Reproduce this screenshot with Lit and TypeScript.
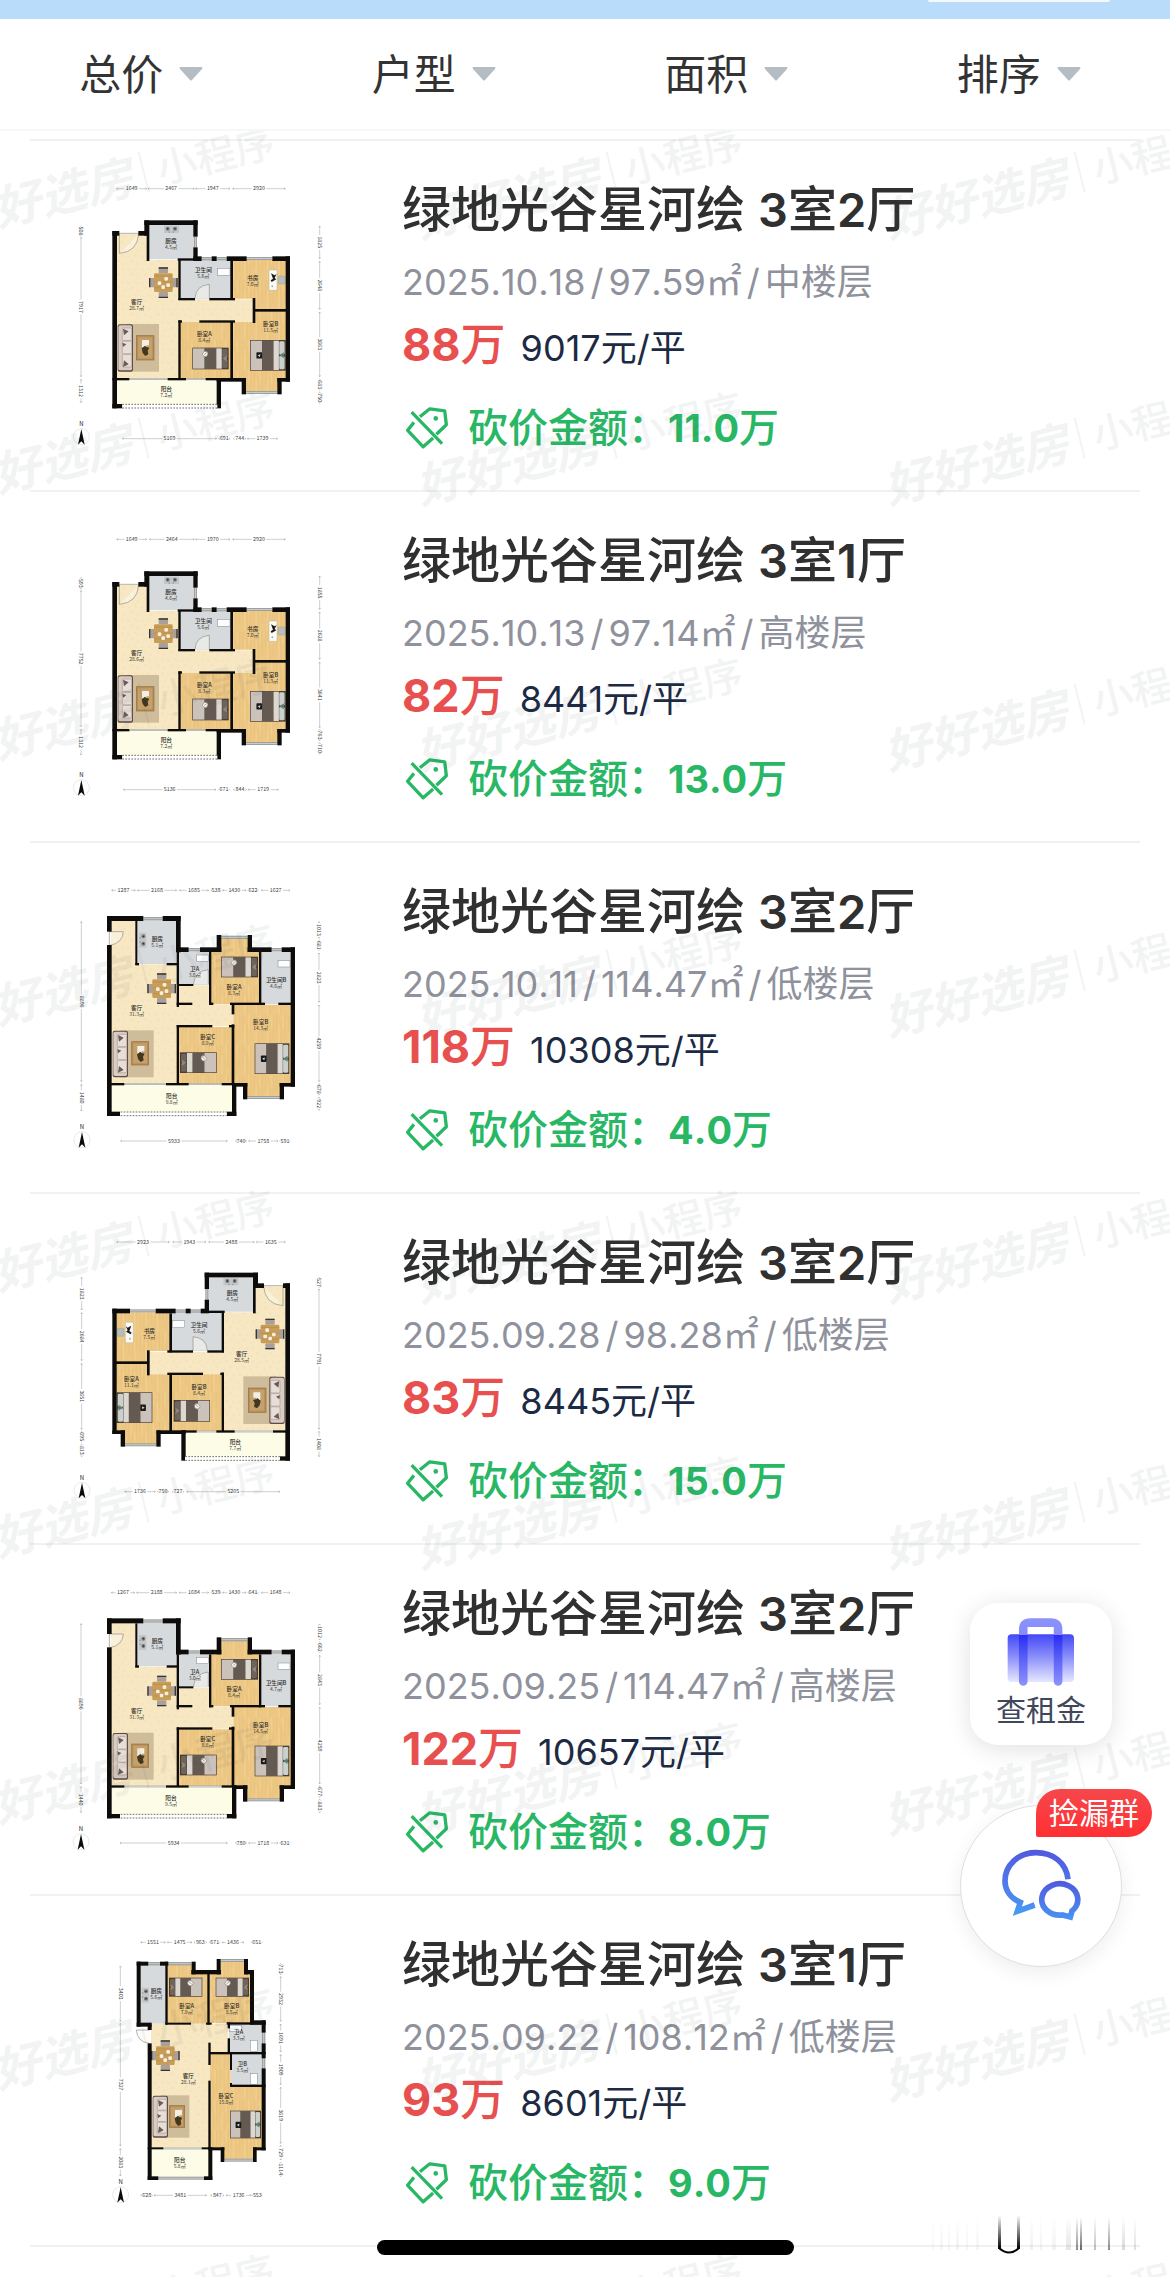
import { LitElement, html, svg, css } from "lit";
import { customElement, property } from "lit/decorators.js";

type Box = [number, number, number, number];
type Label = [number, number, string, string];
type Dim = [number, number, string];
type Bed = [number, number, number, number, "l" | "r"];

interface Shape {
  rooms: [string, string][];
  walls: Box[];
  windows: Box[];
  dashes: Box | null;
  doors: string[];
  stove: [number, number, boolean];
  dining: [number, number];
  lounge: Box;
  table: Box;
  beds: Bed[];
  basins: Box[];
  desk: boolean;
}

interface Plan {
  shape: Shape;
  mirror?: boolean;
  shift: number;
  top: number;
  labels: Label[];
  dimTop: [number, Dim[]];
  dimBottom: [number, Dim[]];
  dimLeft: [number, Dim[]];
  dimRight: [number, Dim[]];
  compass: [number, number];
}

interface Listing {
  rooms: string;
  date: string;
  area: string;
  floor: string;
  price: string;
  unit: string;
  cut: string;
  plan: Plan;
}

const CREAM = "#f7e8c3";
const TILE = "#d7dadd";
const WOOD = "#edc885";
const BALCONY = "#fdfce6";

const shapeA: Shape = {
  rooms: [
    [CREAM, "170,222 262,222 262,300 357,300 357,418 582,418 582,486 357,486 357,657 170,657"],
    [TILE, "265,192 403,192 403,298 265,298"],
    [TILE, "360,300 513,300 513,416 360,416"],
    [WOOD, "518,300 679,300 679,450 583,450 583,416 518,416"],
    [WOOD, "360,486 513,486 513,657 360,657"],
    [WOOD, "518,486 583,486 583,452 679,452 679,657 654,657 654,697 556,697 556,657 518,657"],
    [BALCONY, "170,660 471,660 471,734 170,734"],
  ],
  walls: [
    [157, 213, 171, 745], [157, 213, 178, 227], [235, 213, 267, 227], [253, 181, 413, 195],
    [253, 181, 267, 227], [260, 195, 268, 303], [400, 181, 413, 230], [400, 262, 413, 302],
    [353, 295, 413, 302], [355, 297, 362, 420], [400, 289, 425, 303], [455, 289, 470, 303],
    [500, 289, 560, 303], [637, 289, 690, 303], [677, 289, 690, 665], [511, 303, 519, 420],
    [355, 414, 405, 421], [448, 414, 525, 421], [578, 414, 586, 489], [583, 447, 680, 455],
    [355, 481, 366, 488], [418, 481, 525, 488], [511, 486, 519, 657], [355, 481, 362, 657],
    [157, 654, 208, 661], [323, 654, 378, 661], [437, 654, 483, 661], [470, 654, 483, 745],
    [470, 654, 557, 665], [545, 654, 558, 703], [652, 654, 665, 703], [652, 654, 690, 665],
    [157, 732, 187, 745],
  ],
  windows: [
    [402, 230, 411, 262], [425, 291, 455, 301], [470, 291, 500, 301], [560, 291, 637, 300],
    [558, 693, 652, 702], [208, 655, 323, 660], [378, 655, 437, 660],
  ],
  dashes: [187, 733, 472, 744],
  doors: ["M178 220V280M178 280Q232 276 236 222M178 220H236", "M448 414V373Q408 376 405 414"],
  stove: [312, 197, false],
  dining: [310, 368],
  lounge: [173, 492, 297, 635],
  table: [229, 527, 282, 600],
  beds: [[397, 563, 109, 65, "r"], [570, 540, 107, 92, "r"]],
  basins: [[473, 325, 510, 346]],
  desk: true,
};

const shapeB: Shape = {
  rooms: [
    [CREAM, "153,166 229,166 229,298 352,298 352,361 450,361 450,418 522,418 522,484 352,484 352,657 153,657"],
    [TILE, "230,166 350,166 350,297 230,297"],
    [TILE, "355,259 449,259 449,360 355,360"],
    [WOOD, "453,259 482,259 482,220 565,220 565,259 599,259 599,417 453,417"],
    [TILE, "602,259 694,259 694,417 602,417"],
    [WOOD, "521,419 694,419 694,657 661,657 661,697 560,697 560,657 521,657"],
    [WOOD, "355,486 518,486 518,657 355,657"],
    [BALCONY, "153,660 518,660 518,742 153,742"],
  ],
  walls: [
    [141, 153, 250, 168], [308, 153, 362, 168], [141, 153, 155, 200], [141, 240, 155, 753],
    [348, 153, 362, 262], [226, 168, 232, 300], [226, 294, 237, 301], [320, 294, 352, 301],
    [350, 247, 386, 261], [420, 247, 484, 261], [470, 210, 484, 261], [563, 210, 576, 261],
    [563, 247, 635, 261], [665, 247, 705, 261], [692, 247, 705, 665], [350, 261, 357, 426],
    [350, 413, 397, 420], [447, 261, 454, 420], [357, 357, 400, 363], [597, 261, 604, 420],
    [447, 413, 460, 420], [510, 413, 615, 420], [655, 413, 694, 420], [515, 418, 523, 448],
    [515, 478, 523, 657], [350, 480, 457, 487], [507, 480, 523, 487], [350, 480, 357, 657],
    [141, 654, 193, 661], [318, 654, 386, 661], [485, 654, 530, 661], [516, 654, 529, 753],
    [500, 740, 529, 753], [141, 740, 180, 753], [516, 654, 562, 665], [549, 654, 562, 703],
    [659, 654, 672, 703], [659, 654, 705, 665],
  ],
  windows: [
    [250, 156, 308, 166], [386, 249, 420, 259], [484, 212, 563, 222], [635, 249, 665, 259],
    [562, 693, 659, 702], [193, 655, 318, 660], [386, 655, 485, 660],
  ],
  dashes: [182, 741, 500, 752],
  doors: ["M148 240V200H190Q188 234 150 241", "M445 358V314Q404 318 400 358"],
  stove: [235, 203, true],
  dining: [305, 371],
  lounge: [158, 496, 281, 637],
  table: [215, 530, 266, 600],
  beds: [[483, 275, 111, 62, "r"], [360, 562, 110, 62, "l"], [584, 535, 104, 92, "r"]],
  basins: [[410, 270, 446, 289], [654, 287, 690, 306]],
  desk: false,
};

const shapeC: Shape = {
  rooms: [
    [TILE, "240,135 318,135 318,311 240,311"],
    [WOOD, "320,135 396,135 396,161 445,161 445,311 320,311"],
    [WOOD, "447,161 481,161 481,126 554,126 554,161 572,161 572,309 447,309"],
    [CREAM, "273,311 505,311 505,400 448,400 448,686 273,686"],
    [TILE, "507,311 607,311 607,399 507,399"],
    [TILE, "513,401 607,401 607,497 513,497"],
    [WOOD, "449,401 512,401 512,497 607,497 607,686 582,686 582,720 491,720 491,686 449,686"],
    [BALCONY, "273,687 447,687 447,773 273,773"],
  ],
  walls: [
    [230, 125, 265, 137], [300, 125, 325, 137], [395, 125, 407, 163], [230, 125, 242, 320],
    [230, 308, 275, 320], [316, 125, 323, 314], [316, 308, 393, 314], [394, 150, 483, 163],
    [470, 117, 482, 163], [552, 117, 564, 163], [552, 150, 582, 163], [570, 150, 582, 313],
    [442, 160, 449, 314], [438, 308, 455, 314], [500, 307, 617, 314], [570, 301, 617, 314],
    [605, 301, 617, 338], [605, 370, 617, 415], [605, 445, 617, 691], [503, 307, 510, 325],
    [503, 355, 510, 400], [447, 396, 617, 403], [510, 400, 516, 450], [510, 489, 516, 500],
    [510, 494, 617, 501], [445, 368, 452, 435], [445, 482, 452, 686], [263, 314, 275, 330],
    [263, 370, 275, 780], [263, 682, 310, 688], [425, 682, 457, 688], [445, 682, 457, 780],
    [263, 769, 295, 780], [432, 769, 457, 780], [445, 682, 493, 691], [482, 682, 493, 726],
    [579, 682, 590, 726], [579, 682, 617, 691],
  ],
  windows: [
    [265, 126, 300, 136], [323, 126, 395, 136], [482, 117, 552, 126], [606, 338, 616, 370],
    [606, 415, 616, 445], [493, 716, 579, 725], [310, 683, 425, 688], [295, 770, 432, 779],
  ],
  dashes: null,
  doors: ["M270 330H229Q232 366 268 370"],
  stove: [243, 203, true],
  dining: [316, 407],
  lounge: [278, 526, 388, 653],
  table: [328, 557, 374, 622],
  beds: [[327, 173, 100, 57, "l"], [467, 173, 100, 57, "r"], [510, 572, 93, 83, "r"]],
  basins: [[571, 361, 592, 394], [571, 461, 592, 494], [508, 316, 545, 334]],
  desk: false,
};

const plans: Plan[] = [
  {
    shape: shapeA, shift: 0, top: 9, compass: [64, 830],
    labels: [
      [333, 250, "厨房", "4.5㎡"], [430, 337, "卫生间", "5.6㎡"], [578, 361, "书房", "7.0㎡"],
      [230, 431, "客厅", "28.7㎡"], [433, 529, "卧室A", "8.4㎡"], [632, 498, "卧室B", "11.5㎡"],
      [319, 694, "阳台", "7.2㎡"],
    ],
    dimTop: [86, [[168, 262, "1649"], [262, 405, "2467"], [405, 512, "1947"], [516, 678, "2920"]]],
    dimBottom: [836, [[185, 472, "5169"], [474, 512, "691"], [518, 560, "744"], [560, 655, "1739"]]],
    dimLeft: [63, [[196, 230, "508"], [230, 652, "7917"], [656, 730, "1312"]]],
    dimRight: [779, [[196, 298, "1825"], [302, 450, "2648"], [454, 652, "3663"], [656, 692, "683"], [694, 732, "750"]]],
  },
  {
    shape: shapeA, shift: 3, top: 12, compass: [64, 833],
    labels: [
      [333, 252, "厨房", "4.6㎡"], [430, 339, "卫生间", "5.6㎡"], [578, 362, "书房", "7.0㎡"],
      [230, 434, "客厅", "28.6㎡"], [433, 531, "卧室A", "8.3㎡"], [632, 500, "卧室B", "11.3㎡"],
      [319, 696, "阳台", "7.2㎡"],
    ],
    dimTop: [88, [[168, 262, "1649"], [266, 405, "2464"], [405, 512, "1970"], [516, 678, "2920"]]],
    dimBottom: [839, [[188, 470, "5136"], [474, 510, "671"], [518, 562, "844"], [562, 657, "1719"]]],
    dimLeft: [63, [[200, 240, "593"], [240, 652, "7752"], [656, 737, "1312"]]],
    dimRight: [779, [[196, 300, "1855"], [304, 450, "2628"], [454, 655, "3641"], [656, 694, "763"], [696, 735, "710"]]],
  },
  {
    shape: shapeB, shift: 0, top: 0, compass: [66, 824],
    labels: [
      [292, 228, "厨房", "5.1㎡"], [404, 319, "卫A", "3.0㎡"], [522, 371, "卧室A", "8.3㎡"],
      [648, 352, "卫生间B", "4.6㎡"], [230, 436, "客厅", "31.3㎡"], [602, 478, "卧室B", "14.3㎡"],
      [443, 521, "卧室C", "8.9㎡"], [335, 698, "阳台", "9.8㎡"],
    ],
    dimTop: [76, [[153, 228, "1287"], [230, 352, "2168"], [356, 448, "1685"], [452, 484, "538"], [486, 560, "1430"], [562, 596, "622"], [602, 692, "1627"]]],
    dimBottom: [828, [[180, 504, "5933"], [524, 562, "740"], [564, 656, "1758"], [658, 692, "591"]]],
    dimLeft: [64, [[168, 652, "8896"], [656, 740, "1480"]]],
    dimRight: [777, [[168, 222, "1013"], [224, 258, "681"], [262, 414, "2823"], [418, 652, "4259"], [654, 692, "678"], [694, 738, "922"]]],
  },
  {
    shape: { ...shapeA, dining: [217, 365] }, mirror: true, shift: -23, top: -12, compass: [66, 811],
    labels: [
      [517, 226, "厨房", "4.5㎡"], [417, 321, "卫生间", "5.6㎡"], [268, 338, "书房", "7.5㎡"],
      [545, 408, "客厅", "28.5㎡"], [417, 507, "卧室B", "8.4㎡"], [214, 482, "卧室A", "11.1㎡"],
      [526, 671, "阳台", "7.7㎡"],
    ],
    dimTop: [66, [[168, 330, "2923"], [336, 440, "1943"], [444, 585, "2488"], [587, 678, "1635"]]],
    dimBottom: [815, [[192, 288, "1736"], [290, 328, "750"], [334, 374, "727"], [378, 662, "5205"]]],
    dimLeft: [65, [[170, 272, "1823"], [276, 424, "2684"], [428, 630, "3651"], [632, 668, "695"], [670, 712, "813"]]],
    dimRight: [777, [[170, 205, "527"], [205, 630, "7791"], [632, 712, "1408"]]],
  },
  {
    shape: shapeB, shift: -2, top: -3, compass: [63, 821],
    labels: [
      [292, 226, "厨房", "5.1㎡"], [404, 317, "卫A", "3.0㎡"], [522, 369, "卧室A", "8.4㎡"],
      [648, 350, "卫生间B", "4.7㎡"], [230, 434, "客厅", "31.3㎡"], [602, 476, "卧室B", "14.5㎡"],
      [443, 519, "卧室C", "8.8㎡"], [333, 695, "阳台", "9.5㎡"],
    ],
    dimTop: [74, [[152, 226, "1267"], [228, 352, "2188"], [356, 448, "1684"], [452, 484, "539"], [486, 560, "1430"], [562, 596, "641"], [602, 692, "1648"]]],
    dimBottom: [825, [[178, 504, "5934"], [524, 562, "780"], [564, 656, "1718"], [658, 692, "631"]]],
    dimLeft: [63, [[165, 650, "8896"], [654, 736, "1440"]]],
    dimRight: [779, [[166, 218, "1012"], [220, 256, "662"], [260, 412, "2843"], [416, 650, "4259"], [652, 690, "677"], [692, 736, "883"]]],
  },
  {
    shape: shapeC, shift: 0, top: -6, compass: [182, 824],
    labels: [
      [289, 218, "厨房", "5.6㎡"], [380, 264, "卧室A", "7.9㎡"], [515, 264, "卧室B", "8.5㎡"],
      [536, 341, "卫A", "3.3㎡"], [547, 439, "卫B", "3.5㎡"], [385, 474, "客厅", "28.1㎡"],
      [498, 535, "卧室C", "15.0㎡"], [359, 726, "阳台", "5.8㎡"],
    ],
    dimTop: [67, [[240, 318, "1551"], [320, 398, "1475"], [400, 442, "963"], [446, 482, "671"], [484, 554, "1436"], [572, 608, "651"]]],
    dimBottom: [826, [[240, 280, "628"], [280, 442, "3481"], [450, 494, "847"], [496, 576, "1736"], [576, 608, "553"]]],
    dimLeft: [181, [[136, 306, "3403"], [308, 680, "7327"], [684, 770, "2083"]]],
    dimRight: [662, [[128, 166, "713"], [168, 306, "2932"], [310, 398, "1691"], [402, 496, "1909"], [500, 672, "3619"], [674, 722, "729"], [724, 772, "1114"]]],
  },
];

const listings: Listing[] = [
  { rooms: "3室2厅", date: "2025.10.18", area: "97.59㎡", floor: "中楼层", price: "88万", unit: "9017元/平", cut: "11.0万", plan: plans[0] },
  { rooms: "3室1厅", date: "2025.10.13", area: "97.14㎡", floor: "高楼层", price: "82万", unit: "8441元/平", cut: "13.0万", plan: plans[1] },
  { rooms: "3室2厅", date: "2025.10.11", area: "114.47㎡", floor: "低楼层", price: "118万", unit: "10308元/平", cut: "4.0万", plan: plans[2] },
  { rooms: "3室2厅", date: "2025.09.28", area: "98.28㎡", floor: "低楼层", price: "83万", unit: "8445元/平", cut: "15.0万", plan: plans[3] },
  { rooms: "3室2厅", date: "2025.09.25", area: "114.47㎡", floor: "高楼层", price: "122万", unit: "10657元/平", cut: "8.0万", plan: plans[4] },
  { rooms: "3室1厅", date: "2025.09.22", area: "108.12㎡", floor: "低楼层", price: "93万", unit: "8601元/平", cut: "9.0万", plan: plans[5] },
];

/** Sets runs of digits in <b>, leaving Chinese characters at the surrounding weight. */
const mixed = (text: string) =>
  text.split(/([\d.]+)/).map((part) => (/^[\d.]+$/.test(part) ? html`<b>${part}</b>` : part));

@customElement("floor-plan")
class FloorPlan extends LitElement {
  @property({ attribute: false }) plan!: Plan;

  static styles = css`
    :host { display: block; }
    svg { display: block; width: 100%; height: 100%; }
    text { font-family: "Noto Sans CJK SC", sans-serif; text-anchor: middle; }
    .name { font-size: 17px; font-weight: 500; fill: #2c2b28; }
    .size { font-size: 15px; fill: #3a3935; }
    .dim { font-size: 16px; fill: #3c3d40; }
    .north { font-size: 18px; fill: #222; }
    .rule { stroke: #8d8f92; stroke-width: 1.3; fill: none; }
    .wall { fill: #0d0c0b; }
    .window { fill: #9ca09f; }
    .pane { stroke: #dfe2e2; stroke-width: 2; }
    .door { fill: #fbf9f2; fill-opacity: 0.5; stroke: #8f8c84; stroke-width: 2; }
  `;

  private bed([x, y, w, h, head]: Bed) {
    const flip = head === "l" ? `translate(${2 * x + w} 0) scale(-1 1)` : "";
    return svg`<g transform=${flip}>
      <rect x=${x} y=${y} width=${w} height=${h} fill="#4a3d35"/>
      <rect x=${x + 2} y=${y + 2} width=${w * 0.32} height=${h - 4} fill="#cbc3bb"/>
      <rect x=${x + w * 0.34} y=${y + 1} width=${w * 0.32} height=${h - 2} fill="#645a52"/>
      <rect x=${x + w * 0.66} y=${y + 2} width=${w * 0.15} height=${h - 4} fill="#ddd7d1"/>
      <rect x=${x + w * 0.82} y=${y + 4} width=${w * 0.15} height=${h / 2 - 6} rx="4" fill=${h > 70 ? "#c9d0cd" : "#6d645c"}/>
      <rect x=${x + w * 0.82} y=${y + h / 2 + 2} width=${w * 0.15} height=${h / 2 - 6} rx="4" fill=${h > 70 ? "#c9d0cd" : "#6d645c"}/>
      <path d=${`M${x + w * 0.82} ${y + h / 2}l${w * 0.13} -9v18z`} fill=${h > 70 ? "#5f8177" : "#8f857b"}/>
      ${h > 70
        ? svg`<rect x=${x + w * 0.18} y=${y + h * 0.4} width="17" height="19" rx="2" fill="#1c1b1b"/><path d=${`M${x + w * 0.18 + 4} ${y + h * 0.4 + 9}l8 -3l-2 8z`} fill="#ddd"/>`
        : svg`<path d=${`M${x + w * 0.27} ${y + h * 0.3}q5 -12 14 -8q7 6 0 14q-9 6 -14 -6zm5 2l9 -7`} fill="#f7f5f2" stroke="#8a8178" stroke-width="2"/>`}
    </g>`;
  }

  private furniture(s: Shape) {
    const [dx, dy] = s.dining;
    const [lx, ly, lr, lb] = s.lounge;
    const [tx, ty, tr, tb] = s.table;
    const [sx, sy, upright] = s.stove;
    const seat = (lb - ly - 24) / 3;
    return svg`
      <rect x=${lx + 24} y=${ly} width=${lr - lx - 24} height=${lb - ly} fill="#cfbc9a"/>
      <rect x=${lx} y=${ly + 1} width="46" height=${lb - ly - 1} rx="6" fill="#5f4a45"/>
      <rect x=${lx + 2} y=${ly + 4} width="41" height=${lb - ly - 8} rx="5" fill="#d8ccc4"/>
      ${[0, 1, 2].map((i) => svg`<rect x=${lx + 14} y=${ly + 12 + i * seat} width="28" height=${seat - 2} rx="3" fill="#e7ded8" stroke="#9b8b83" stroke-width="1.5"/>`)}
      <path d=${`M${lx + 16} ${ly + 14}l17 8l-14 12zM${lx + 16} ${lb - 14}l17 -8l-14 -12zM${lx + 14} ${ly + 56}l12 5l-10 8z`} fill="#6b5a56"/>
      <rect x=${tx} y=${ty} width=${tr - tx} height=${tb - ty} fill="#b58d58" stroke="#94703f" stroke-width="2"/>
      <rect x=${tx + 5} y=${ty + 5} width=${tr - tx - 10} height=${tb - ty - 10} fill="#c6a06b"/>
      <path d=${`M${tx + 17} ${ty + 13}h21v16h-8v7h-13z`} fill="#f3efe4"/>
      <path d=${`M${tx + 16} ${ty + 38}l10 -8l4 4l9 2l-5 9l2 11l-9 5l-8 -9z`} fill="#40381f"/>

      ${[[dx - 14, dy - 46, 28, 18], [dx - 14, dy + 28, 28, 18], [dx - 43, dy - 14, 18, 28], [dx + 25, dy - 14, 18, 28]].map(
        ([x, y, w, h]) => svg`<rect x=${x} y=${y} width=${w} height=${h} rx="3" fill="#a7a09b"/>`
      )}
      <path d=${`M${dx - 14} ${dy - 44}h28M${dx - 14} ${dy + 44}h28M${dx - 41} ${dy - 14}v28M${dx + 41} ${dy - 14}v28`} stroke="#3c3430" stroke-width="4"/>
      <rect x=${dx - 28} y=${dy - 28} width="56" height="56" rx="4" fill="#c89d58"/>
      ${[-20, -2, 15].map((o) => svg`<path d=${`M${dx - 28} ${dy + o}h56`} stroke="#b2853f" stroke-width="1.5"/>`)}
      ${[[-17, -4], [3, -17], [9, 2], [-6, 8]].map(([x, y]) => svg`<rect x=${dx + x} y=${dy + y} width="11" height="11" rx="4" fill="#f5efe4"/>`)}

      <g transform=${upright ? `translate(${sx + 24} ${sy}) rotate(90)` : `translate(${sx} ${sy})`}>
        <rect width="45" height="22" fill="#c3c6c8"/>
        <circle cx="11" cy="9" r="6" fill="#77797b"/><circle cx="33" cy="9" r="6" fill="#77797b"/>
        <circle cx="11" cy="9" r="2" fill="#222"/><circle cx="33" cy="9" r="2" fill="#222"/>
        <path d="M14 19h4M26 19h4" stroke="#666" stroke-width="2"/>
      </g>
      ${s.beds.map((b) => this.bed(b))}
      ${s.basins.map(([x, y, r, b]) => svg`<rect x=${x} y=${y} width=${r - x} height=${b - y} fill="#fdfdfd" stroke="#84888b" stroke-width="1.5"/>`)}
      ${s.desk
        ? svg`<rect x="655" y="348" width="21" height="24" rx="3" fill="#b7beb9" stroke="#8a918c"/>
          <rect x="627" y="330" width="24" height="61" rx="2" fill="#fbfaf7" stroke="#a79c88"/>
          <path d="M633 340l11 6l6 -4l-6 12l5 4l-14 8l-3 -5l7 -5z" fill="#1d1c1c"/><circle cx="637" cy="379" r="3" fill="#8fbf9a"/>`
        : ""}`;
  }

  private shapes(s: Shape) {
    return svg`
      ${s.rooms.map(([fill, points]) => svg`
        <polygon points=${points} fill=${fill}/>
        ${fill === WOOD ? svg`<polygon points=${points} fill="url(#grain)"/>` : ""}
        ${fill === CREAM ? svg`<polygon points=${points} fill="url(#marble)"/>` : ""}`)}
      ${s.doors.map((d) => svg`<path class="door" d=${d}/>`)}
      ${this.furniture(s)}
      ${s.windows.map(([x, y, r, b]) => svg`<rect class="window" x=${x} y=${y} width=${r - x} height=${b - y}/>
        <path class="pane" d=${r - x > b - y ? `M${x} ${(y + b) / 2}H${r}` : `M${(x + r) / 2} ${y}V${b}`}/>`)}
      ${s.walls.map(([x, y, r, b]) => svg`<rect class="wall" x=${x} y=${y} width=${r - x} height=${b - y}/>`)}
      ${s.dashes
        ? svg`<rect x=${s.dashes[0]} y=${s.dashes[1]} width=${s.dashes[2] - s.dashes[0]} height=${s.dashes[3] - s.dashes[1]} fill="#fff"/>
          <path d=${`M${s.dashes[0]} ${s.dashes[1]}H${s.dashes[2]}M${s.dashes[0]} ${s.dashes[3]}H${s.dashes[2]}`} stroke="#4b4a46" stroke-width="2.4" stroke-dasharray="5 4"/>`
        : ""}`;
  }

  private dims([at, list]: [number, Dim[]], vertical: boolean) {
    return list.map(([a, b, label]) => {
      const mid = (a + b) / 2;
      const half = label.length * 4 + 6;
      const lines = b - a > half * 2
        ? `M${a + 2} 0H${mid - half}M${mid + half} 0H${b - 2}M${a + 6} -3l-4 3l4 3M${b - 6} -3l4 3l-4 3`
        : `M${a + 2} -2v4M${b - 2} -2v4`;
      return svg`<g transform=${vertical ? `translate(${at} 0) rotate(90) scale(1 -1) scale(1 -1)` : `translate(0 ${at})`}>
        <path class="rule" d=${lines}/>
        <text class="dim" x=${mid} y="5">${label}</text>
      </g>`;
    });
  }

  render() {
    const p = this.plan;
    const [cx, cy] = p.compass;
    const move = p.mirror ? `translate(847 ${p.shift}) scale(-1 1)` : `translate(0 ${p.shift})`;
    return html`<svg viewBox=${`0 ${p.top} 870 900`} role="img" aria-label="户型图">
      <defs>
        <pattern id="grain" width="34" height="90" patternUnits="userSpaceOnUse">
          <path d="M5 0V50M17 20V90M28 0V70" stroke="#dcae5c" stroke-width="3" opacity=".3"/>
          <path d="M11 30V90M23 0V40" stroke="#f8dda3" stroke-width="4" opacity=".35"/>
        </pattern>
        <pattern id="marble" width="40" height="40" patternUnits="userSpaceOnUse">
          <path d="M2 8l9 3M24 4l7 6M12 25l8 -4M30 30l6 3" stroke="#ecd6a2" stroke-width="4" opacity=".4"/>
        </pattern>
      </defs>
      <g transform=${move}>${this.shapes(p.shape)}</g>
      ${p.labels.map(([x, y, name, size]) => svg`<text class="name" x=${x} y=${y}>${name}</text><text class="size" x=${x} y=${y + 18}>${size}</text>`)}
      ${this.dims(p.dimTop, false)}${this.dims(p.dimBottom, false)}
      ${this.dims(p.dimLeft, true)}${this.dims(p.dimRight, true)}
      <text class="north" x=${cx} y=${cy - 31}>N</text>
      <circle cx=${cx} cy=${cy} r="24" fill="#fff" stroke="#d2d2d2" stroke-width="1.5"/>
      <path d=${`M${cx} ${cy - 23}L${cx + 10} ${cy + 24}L${cx} ${cy + 14}L${cx - 10} ${cy + 24}Z`} fill="#0b0b0b"/>
    </svg>`;
  }
}

@customElement("listing-row")
class ListingRow extends LitElement {
  @property({ attribute: false }) item!: Listing;

  static styles = css`
    :host { display: block; }
    .row {
      display: grid;
      grid-template-columns: 290px 1fr;
      column-gap: 52px;
      padding: 22px 0 27px 30px;
      color: inherit;
      text-decoration: none;
    }
    .plan { height: 300px; }
    .info {
      display: flex;
      flex-direction: column;
      align-items: flex-start;
      padding-top: 15px;
      min-width: 0;
      font-kerning: none;
      font-feature-settings: "calt" 0;
    }
    .title {
      margin: 0;
      font-size: 49px;
      line-height: 64px;
      font-weight: 500;
      color: #303030;
      white-space: nowrap;
    }
    .title b { font-size: 47px; font-weight: 600; }
    .meta { display: flex; gap: 5px; margin-top: 16px; font-size: 36px; line-height: 48px; color: #8f929c; }
    .cost { display: flex; align-items: baseline; gap: 15px; margin-top: 11px; line-height: 56px; }
    .price { font-size: 45px; font-weight: 500; color: #e8504f; }
    .price b, .cut b { font-weight: 700; }
    .unit { font-size: 36px; color: #1c2a44; }
    .cut {
      display: flex;
      align-items: center;
      gap: 20px;
      margin-top: 28px;
      font-size: 40px;
      line-height: 48px;
      font-weight: 500;
      color: #28b765;
    }
    .cut b { font-size: 38px; }
    .tag { width: 42px; height: 42px; margin-left: 4px; }
  `;

  render() {
    const i = this.item;
    return html`<a class="row" href="#listing">
      <floor-plan class="plan" .plan=${i.plan}></floor-plan>
      <div class="info">
        <h2 class="title">绿地光谷星河绘 ${mixed(i.rooms)}</h2>
        <div class="meta"><span>${i.date}</span><span>/</span><span>${i.area}</span><span>/</span><span>${i.floor}</span></div>
        <div class="cost"><span class="price">${mixed(i.price)}</span><span class="unit">${i.unit}</span></div>
        <div class="cut">
          <svg class="tag" viewBox="0 0 127 126" fill="none" stroke="currentColor" stroke-width="10" stroke-linejoin="round" aria-hidden="true">
            <path d="M17 15L109 110M42 29L72 5L117 11L122 53L92 82M24 46L5 70L52 120L82 93"/>
            <circle cx="90" cy="34" r="7" fill="currentColor" stroke="none"/>
          </svg>
          <span>砍价金额：${mixed(i.cut)}</span>
        </div>
      </div>
    </a>`;
  }
}

@customElement("app-root")
class AppRoot extends LitElement {
  static styles = css`
    :host {
      display: block;
      position: relative;
      min-height: 100vh;
      overflow: hidden;
      background: #fff;
      font-family: Inter, "Noto Sans CJK SC", sans-serif;
    }
    .strip { display: flex; justify-content: flex-end; height: 19px; padding-right: 60px; background: #b9dcfb; }
    .pill { width: 182px; height: 2px; border-radius: 0 0 8px 8px; background: #f3f9ff; }
    .filters { display: grid; grid-template-columns: repeat(4, 1fr); border-bottom: 2px solid #f7f7f8; }
    .filter {
      display: flex;
      align-items: center;
      justify-content: center;
      gap: 16px;
      height: 110px;
      padding: 0 10px 6px 0;
      border: 0;
      background: none;
      font: inherit;
      font-size: 42px;
      color: #333;
    }
    .caret { width: 24px; height: 14px; margin-top: 6px; fill: #b5bdc4; }
    .body { position: relative; padding: 8px 30px 30px; }
    .list { margin: 0; padding: 0; list-style: none; border-top: 2px solid #f1f1f3; }
    .item { border-bottom: 2px solid #f1f1f3; }
    .watermark {
      position: absolute;
      inset: 0;
      width: 100%;
      height: 100%;
      pointer-events: none;
      fill: #39424e;
      opacity: 0.06;
    }
    .brand { font-size: 47px; font-weight: 700; font-style: italic; text-anchor: end; }
    .kind { font-size: 40px; font-weight: 500; }
    .float {
      position: absolute;
      right: 48px;
      top: 1603px;
      display: flex;
      flex-direction: column;
      align-items: center;
      gap: 60px;
    }
    .rent {
      display: flex;
      flex-direction: column;
      align-items: center;
      gap: 2px;
      width: 142px;
      height: 142px;
      padding: 15px 0 0;
      border: 0;
      border-radius: 28px;
      background: #fff;
      box-shadow: 0 4px 24px rgba(0, 0, 0, 0.12);
      font: inherit;
      font-size: 30px;
      line-height: 44px;
      color: #3f485b;
    }
    .case { width: 68px; height: 68px; }
    .chat {
      position: relative;
      display: grid;
      place-items: center;
      width: 162px;
      height: 162px;
      padding: 0;
      border: 1px solid #dfdfe1;
      border-radius: 50%;
      background: #fff;
      box-shadow: 0 6px 20px rgba(0, 0, 0, 0.07);
      font: inherit;
    }
    .bubbles { width: 80px; height: 74px; }
    .badge {
      position: absolute;
      left: 75px;
      top: -17px;
      width: 116px;
      border-radius: 24px 24px 24px 2px;
      background: linear-gradient(#f6474b, #ff3033);
      font-size: 30px;
      line-height: 48px;
      color: #fff;
    }
    .home {
      position: absolute;
      left: 0;
      right: 0;
      bottom: 24px;
      width: 417px;
      height: 15px;
      margin: 0 auto;
      border-radius: 8px;
      background: #000;
    }
    .smear { position: absolute; right: 28px; bottom: 24px; width: 216px; height: 40px; }
  `;

  private watermark() {
    const marks = [];
    for (let row = 0; row < 9; row++)
      for (let col = 0; col < 3; col++) marks.push([108 + 468 * col, 51 + 266 * row]);
    return html`<svg class="watermark" aria-hidden="true">
      ${marks.map(([x, y]) => svg`<g transform=${`translate(${x} ${y}) rotate(-14)`}>
        <text class="brand" x="24" y="17">好好选房</text>
        <rect x="36" y="-22" width="2" height="42"/>
        <text class="kind" x="51" y="15">小程序</text>
      </g>`)}
    </svg>`;
  }

  render() {
    return html`
      <div class="strip"><div class="pill"></div></div>
      <nav class="filters">
        ${["总价", "户型", "面积", "排序"].map((name) => html`<button class="filter" type="button">
          ${name}<svg class="caret" viewBox="0 0 24 14" aria-hidden="true"><path d="M1 0H23Q24 1 23 2L13 13Q12 14 11 13L1 2Q0 1 1 0Z"/></svg>
        </button>`)}
      </nav>
      <main class="body">
        <ul class="list">
          ${listings.map((item) => html`<li class="item"><listing-row .item=${item}></listing-row></li>`)}
        </ul>
        ${this.watermark()}
      </main>
      <aside class="float">
        <button class="rent" type="button">
          <svg class="case" viewBox="0 0 205 205" aria-hidden="true">
            <defs>
              <linearGradient id="case" x2="0" y2="1"><stop offset="0" stop-color="#4348f6"/><stop offset=".5" stop-color="#8f93fa"/><stop offset="1" stop-color="#e6e7ff"/></linearGradient>
              <linearGradient id="strap" x2="0" y2="1"><stop offset="0" stop-color="#8d93fb"/><stop offset=".24" stop-color="#858bfa"/><stop offset=".25" stop-color="#2a2df4"/><stop offset=".6" stop-color="#5a60f7"/><stop offset="1" stop-color="#8d93fb"/></linearGradient>
            </defs>
            <rect x="2" y="49" width="200" height="144" rx="12" fill="url(#case)"/>
            <path d="M36 191V36Q36 1 71 1H132Q167 1 167 36V191A13 13 0 0 1 141 191V27H62V191A13 13 0 0 1 36 191Z" fill="url(#strap)"/>
          </svg>
          查租金
        </button>
        <button class="chat" type="button">
          <svg class="bubbles" viewBox="0 0 240 222" fill="none" stroke-width="17" aria-hidden="true">
            <defs><linearGradient id="blue" gradientUnits="userSpaceOnUse" x1="120" y1="0" x2="100" y2="222"><stop offset="0" stop-color="#5158de"/><stop offset=".6" stop-color="#4f7fee"/><stop offset="1" stop-color="#43a5f5"/></linearGradient>
            <linearGradient id="sea" gradientUnits="userSpaceOnUse" x1="173" y1="95" x2="173" y2="222"><stop offset="0" stop-color="#5158de"/><stop offset="1" stop-color="#4799f3"/></linearGradient></defs>
            <path d="M201 91C196 40 155 11 105 11C52 11 12 48 12 96C12 125 30 148 58 160L49 187L101 168" stroke="url(#blue)"/>
            <path d="M208 204L184 198A54 47 0 1 1 213 186Z" stroke="url(#sea)"/>
          </svg>
          <span class="badge">捡漏群</span>
        </button>
      </aside>
      <svg class="smear" viewBox="0 0 216 40" aria-hidden="true">
        <defs>
          <linearGradient id="fade" x2="0" y2="1"><stop offset="0" stop-color="#000" stop-opacity="0"/><stop offset="1" stop-color="#000"/></linearGradient>
        </defs>
        ${[[6, 2, 0.03], [14, 3, 0.04], [22, 2, 0.04], [30, 3, 0.05], [40, 2, 0.04], [50, 3, 0.04], [104, 3, 0.06], [114, 2, 0.05], [126, 4, 0.05], [140, 5, 0.1], [150, 2, 0.45], [154, 2, 0.6], [168, 2, 0.25], [182, 2, 0.45], [196, 3, 0.15], [208, 2, 0.12]].map(
          ([x, w, o]) => svg`<rect x=${x} y="2" width=${w} height="33" fill="url(#fade)" opacity=${o}/>`
        )}
        <rect x="72" y="0" width="3" height="34" fill="url(#fade)"/>
        <rect x="91" y="0" width="3" height="34" fill="url(#fade)"/>
        <path d="M73 33Q83 42 93 33" fill="none" stroke="#000" stroke-width="2"/>
      </svg>
      <div class="home"></div>
    `;
  }
}
